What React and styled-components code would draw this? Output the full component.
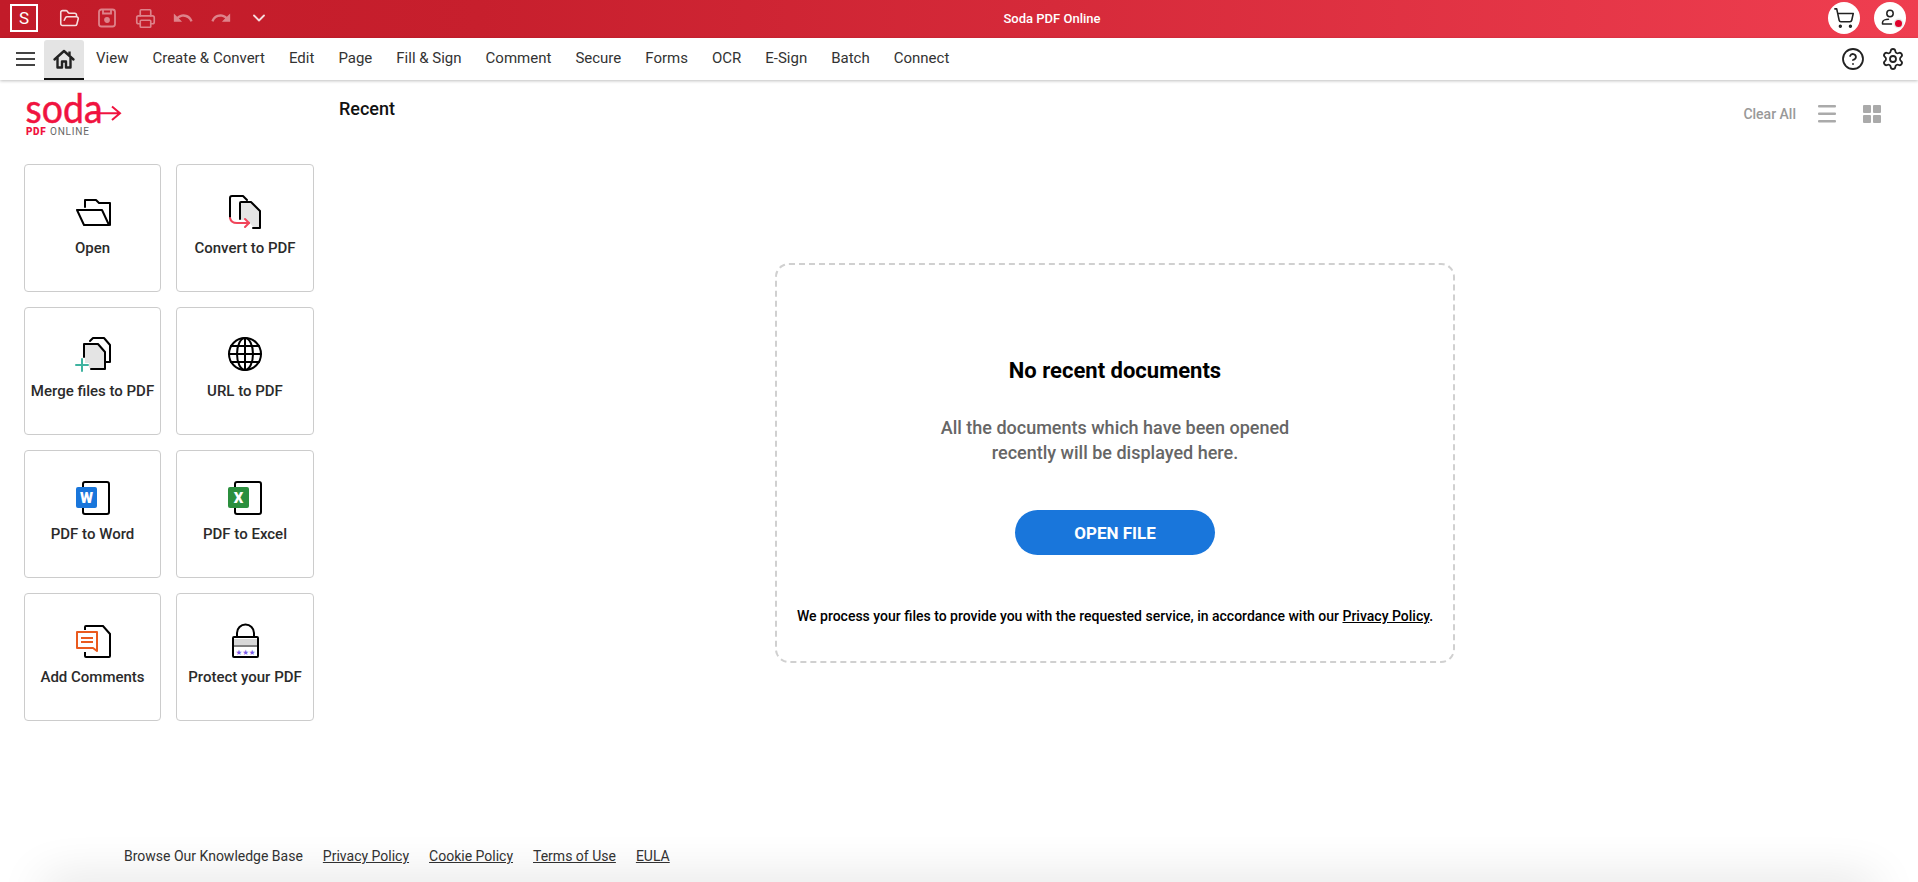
import React from 'react';
import styled, { createGlobalStyle } from 'styled-components';
import { ShoppingCart, Settings, CircleHelp, ChevronDown, Printer, FolderOpen } from 'lucide-react';
import { MdUndo, MdRedo } from 'react-icons/md';

const GlobalStyle = createGlobalStyle`
	html, body {
		margin: 0;
		padding: 0;
		height: 100%;
		background: #fff;
		font-family: Roboto, "Liberation Sans", sans-serif;
		overflow: hidden;
	}
`;

//Top red bar
const PAGE = styled.div`
	position: relative;
	height: 882px;
	display: flex;
	flex-direction: column;
	overflow: hidden;
`;
const TITLEBAR = styled.header`
	height: 38px;
	flex: none;
	box-sizing: border-box;
	display: flex;
	align-items: center;
	padding: 0 12px 2px 10px;
	background: linear-gradient(90deg, #c21b29 0%, #c71f2d 25%, #d62a3a 55%, #ef3e50 100%);
	color: #fff;
`;
const LOGOBOX = styled.div`
	width: 24px;
	height: 24px;
	border: 2px solid #fff;
	display: flex;
	align-items: center;
	justify-content: center;
	font-size: 17px;
	margin-right: 12px;
`;
const QUICK = styled.div`
	width: 38px;
	display: flex;
	justify-content: center;
	color: #fff;
	opacity: ${(p) => (p.$dim ? 0.45 : 0.85)};
`;
const TITLE = styled.div`
	position: absolute;
	left: 0;
	right: 0;
	padding-left: 186px;
	text-align: center;
	font-size: 13px;
	font-weight: 500;
	pointer-events: none;
`;
const ROUND = styled.div`
	position: relative;
	width: 32px;
	height: 32px;
	border-radius: 50%;
	background: #fff;
	color: #222;
	display: flex;
	align-items: center;
	justify-content: center;
	margin-left: 14px;
`;
const DOT = styled.span`
	position: absolute;
	right: 4px;
	bottom: 7px;
	width: 7px;
	height: 7px;
	border-radius: 50%;
	background: #e0002a;
	box-shadow: 0 0 0 1.5px #e8e8e8;
`;
const RIGHTSIDE = styled.div`
	margin-left: auto;
	display: flex;
`;

//Menu bar
const MENUBAR = styled.nav`
	height: 42px;
	flex: none;
	display: flex;
	align-items: center;
	padding-left: 16px;
	padding-right: 13px;
	background: #fff;
	box-shadow: 0 1px 3px rgba(0, 0, 0, 0.25);
	color: #333;
	font-size: 15px;
	z-index: 1;
`;
const BURGER = styled.div`
	width: 19px;
	height: 14px;
	margin-right: 9px;
	border-top: 2px solid #444;
	border-bottom: 2px solid #444;
	position: relative;
	box-sizing: border-box;
	&::after {
		content: '';
		position: absolute;
		left: 0;
		right: 0;
		top: 4px;
		height: 2px;
		background: #444;
	}
`;
const HOMETAB = styled.div`
	width: 40px;
	height: 40px;
	margin-top: 1px;
	margin-right: 12px;
	box-sizing: border-box;
	background: #e4e4e4;
	border-bottom: 2px solid #111;
	border-radius: 3px 3px 0 0;
	display: flex;
	align-items: center;
	justify-content: center;
	color: #222;
`;
const MENUITEM = styled.div`
	margin-right: 24px;
	margin-bottom: 2px;
	white-space: nowrap;
`;
const MENURIGHT = styled.div`
	margin-left: auto;
	display: flex;
	gap: 16px;
	color: #222;
`;

//Main
const MAIN = styled.main`
	flex: 1;
	display: flex;
	min-height: 0;
`;
const SIDE = styled.aside`
	width: 339px;
	flex: none;
	box-sizing: border-box;
	padding: 4px 0 0 24px;
`;
const BRAND = styled.div`
	height: 80px;
`;
const GRID = styled.div`
	display: grid;
	grid-template-columns: 137px 138px;
	grid-auto-rows: 128px;
	gap: 15px;
`;
const TOOL = styled.div`
	box-sizing: border-box;
	border: 1px solid #ccc;
	border-radius: 4px;
	display: flex;
	flex-direction: column;
	align-items: center;
	padding-top: 29px;
	color: #2b2b2b;
	font-size: 15px;
	font-weight: 500;
	white-space: nowrap;
`;
const TOOLICON = styled.div`
	height: 36px;
	margin-bottom: 9px;
`;
const CONTENT = styled.section`
	flex: 1;
	position: relative;
	display: flex;
	flex-direction: column;
`;
const TOPROW = styled.div`
	display: flex;
	align-items: center;
	height: 36px;
	margin-top: 12px;
	padding-right: 37px;
`;
const RECENT = styled.h2`
	margin: 0;
	font-size: 18px;
	font-weight: 500;
	color: #111;
	margin-top: -3px;
`;
const CLEAR = styled.div`
	margin-left: auto;
	color: #999;
	font-size: 14px;
	font-weight: 500;
	margin-top: 8px;
`;
const VIEWICON = styled.div`
	margin-left: ${(p) => p.$gap}px;
	margin-top: 8px;
	display: flex;
`;
const DROP = styled.div`
	align-self: flex-start;
	margin: 135px 0 0 436px;
	width: 680px;
	height: 400px;
	box-sizing: border-box;
	border: 2px dashed #d0d0d0;
	border-radius: 14px;
	display: flex;
	flex-direction: column;
	align-items: center;
	padding-top: 92px;
`;
const HEAD = styled.h1`
	margin: 0;
	font-size: 22px;
	font-weight: 700;
	color: #000;
	line-height: 28px;
`;
const SUB = styled.p`
	margin: 30px 0 0;
	font-size: 18px;
	font-weight: 500;
	line-height: 25px;
	color: #666;
	text-align: center;
`;
const BUTTON = styled.div`
	margin-top: 45px;
	width: 200px;
	height: 45px;
	border-radius: 23px;
	background: #1976db;
	color: #fff;
	font-size: 17px;
	font-weight: 700;
	display: flex;
	align-items: center;
	justify-content: center;
`;
const NOTE = styled.p`
	margin: 53px 0 0;
	font-size: 14px;
	font-weight: 500;
	color: #000;
	white-space: nowrap;
	a {
		color: inherit;
		text-decoration: underline;
	}
`;

//Footer
const FOOTER = styled.footer`
	position: absolute;
	left: 124px;
	bottom: 18px;
	display: flex;
	gap: 20px;
	color: #333;
	font-size: 14px;
	a {
		color: inherit;
		text-decoration: underline;
	}
`;
const SHADE = styled.div`
	position: absolute;
	left: 44px;
	right: 44px;
	bottom: -24px;
	height: 24px;
	box-shadow: 0 0 48px rgba(0, 0, 0, 0.16);
`;

const Stroke = ({ children }) => (
	<svg width="36" height="36" viewBox="0 0 36 36" fill="none" stroke="#000" strokeWidth="2" strokeLinejoin="round" strokeLinecap="round">
		{children}
	</svg>
);

const OpenIcon = () => (
	<Stroke>
		<path d="M10 13V6h11l3 3h11v22" />
		<path d="M2 16h25l7 15H9z" fill="#fff" />
	</Stroke>
);
const ConvertIcon = () => (
	<Stroke>
		<path d="M3 23V4q0-2 2-2h11l4 4" />
		<path d="M14 9h10l8 8v16h-6l-3-4-3-3h-6z" fill="#e4e4e4" stroke="none" />
		<path d="M13 25V9q0-1 1-1h10l9 9v17h-7" />
		<path d="M3 24q1 5 7 5h12" stroke="#f0455a" />
		<path d="M18 25l4 4-4 4" stroke="#f0455a" />
	</Stroke>
);
const MergeIcon = () => (
	<Stroke>
		<path d="M15 4l3-3h11l6 7v17h-4" />
		<path d="M10 8h13l6 7v16H14V26H10z" fill="#e4e4e4" stroke="none" />
		<path d="M9 20V7h14l7 8v17H16" />
		<path d="M1 28h12M7 22v12" stroke="#3fb3a0" />
	</Stroke>
);
const GlobeIcon = () => (
	<Stroke>
		<circle cx="18" cy="17" r="16" />
		<ellipse cx="18" cy="17" rx="8" ry="16" />
		<path d="M18 1v32M4 9h28M4 25h28M2 17h32" />
	</Stroke>
);
const OfficeIcon = ({ color, letter }) => (
	<svg width="36" height="36" viewBox="0 0 36 36">
		<path d="M8 7V4q0-2 2-2h22q2 0 2 2v28q0 2-2 2H10q-2 0-2-2v-4" fill="none" stroke="#000" strokeWidth="2" />
		<rect x="1" y="7" width="21" height="21" rx="2" fill={color} />
		<text x="11.500" y="23" textAnchor="middle" fontFamily="Roboto, sans-serif" fontWeight="900" fontSize="15" fill="#fff">{letter}</text>
	</svg>
);
const CommentIcon = () => (
	<svg width="36" height="36" viewBox="0 0 36 36" fill="none">
		<path d="M10 7V4q0-1 1-1h17l7 8v22q0 1-1 1H11q-1 0-1-1v-4" stroke="#000" strokeWidth="2" />
		<path d="M2 9h20v19l-4-3H2z" fill="#fff" stroke="#ea5a1e" strokeWidth="2" strokeLinejoin="round" />
		<path d="M6 15h12M6 19h12" stroke="#ea5a1e" strokeWidth="2" />
	</svg>
);
const LockIcon = () => (
	<svg width="36" height="36" viewBox="0 0 36 36" fill="none">
		<path d="M10 14V10a8.500 8.500 0 0 1 17 0v4" stroke="#000" strokeWidth="2" />
		<rect x="6" y="14" width="25" height="20" rx="1" fill="#fff" stroke="#000" strokeWidth="2" />
		<rect x="7" y="16" width="23" height="6" fill="#d8d8d8" />
		<path d="M7 23h23" stroke="#000" strokeWidth="1" />
		<text x="18.500" y="32" textAnchor="middle" fontFamily="DejaVu Sans, sans-serif" fontSize="7.500" fill="#7b5be6">★★★</text>
	</svg>
);

const SaveIcon = () => (
	<svg width="20" height="20" viewBox="0 0 20 20" fill="none" stroke="currentColor" strokeWidth="1.800">
		<rect x="2" y="1.500" width="16" height="17" rx="2.500" />
		<path d="M6 1.500v4h8v-4" />
		<circle cx="10" cy="12" r="2" fill="currentColor" />
	</svg>
);
const HomeIcon = () => (
	<svg width="24" height="24" viewBox="0 0 24 24" fill="none" stroke="currentColor" strokeWidth="2.400" strokeLinejoin="round">
		<path d="M2.500 12.500 12 4l9.500 8.500" strokeLinecap="round" />
		<path d="M17.500 8V4.500" />
		<path d="M5.500 10.500V20.500h4.500v-6h4v6h4.500V10.500" />
	</svg>
);
const UserIcon = () => (
	<svg width="20" height="20" viewBox="0 0 20 20" fill="none" stroke="#222" strokeWidth="1.500">
		<circle cx="10" cy="5.500" r="3.200" />
		<path d="M2.500 16v-1.500c0-2 3-3.200 6-3.200M2.500 16h9" strokeLinecap="round" />
	</svg>
);

const SodaLogo = () => (
	<svg width="100" height="54" viewBox="0 0 100 54">
		<text x="1.500" y="38.700" fontFamily="Lato, Roboto, sans-serif" fontSize="40" fill="#f0133f" stroke="#f0133f" strokeWidth="0.500" textLength="77" lengthAdjust="spacingAndGlyphs">soda</text>
		<path d="M67 29.300h28.500M88 22.500l8 6.800-8 6.800" fill="none" stroke="#f0133f" strokeWidth="2" />
		<text x="2" y="51" fontFamily="Roboto, sans-serif" fontWeight="900" fontSize="10" fill="#f0133f" letterSpacing="0.600">PDF</text>
		<text x="26" y="51" fontFamily="Roboto, sans-serif" fontSize="10" fill="#666" letterSpacing="0.800">ONLINE</text>
	</svg>
);

const ListIcon = () => (
	<svg width="18" height="18" viewBox="0 0 18 18" fill="#aaa">
		<rect y="0" width="18" height="2.500" rx="1" />
		<rect y="7.500" width="18" height="2.500" rx="1" />
		<rect y="15" width="18" height="2.500" rx="1" />
	</svg>
);
const TilesIcon = () => (
	<svg width="18" height="18" viewBox="0 0 18 18" fill="#aaa">
		<rect width="8" height="8" rx="1" />
		<rect x="10" width="8" height="8" rx="1" />
		<rect y="10" width="8" height="8" rx="1" />
		<rect x="10" y="10" width="8" height="8" rx="1" />
	</svg>
);

const menu = ['View', 'Create & Convert', 'Edit', 'Page', 'Fill & Sign', 'Comment', 'Secure', 'Forms', 'OCR', 'E-Sign', 'Batch', 'Connect'];
const tools = [
	{ label: 'Open', icon: <OpenIcon /> },
	{ label: 'Convert to PDF', icon: <ConvertIcon /> },
	{ label: 'Merge files to PDF', icon: <MergeIcon /> },
	{ label: 'URL to PDF', icon: <GlobeIcon /> },
	{ label: 'PDF to Word', icon: <OfficeIcon color="#1976db" letter="W" /> },
	{ label: 'PDF to Excel', icon: <OfficeIcon color="#2b8f3e" letter="X" /> },
	{ label: 'Add Comments', icon: <CommentIcon /> },
	{ label: 'Protect your PDF', icon: <LockIcon /> },
];

const App = () => {
	return (
		<PAGE>
			<GlobalStyle />
			<TITLEBAR>
				<LOGOBOX>S</LOGOBOX>
				<QUICK><FolderOpen size={21} strokeWidth={1.8} /></QUICK>
				<QUICK $dim><SaveIcon /></QUICK>
				<QUICK $dim><Printer size={21} strokeWidth={1.9} /></QUICK>
				<QUICK $dim><MdUndo size={22} /></QUICK>
				<QUICK $dim><MdRedo size={22} /></QUICK>
				<QUICK><ChevronDown size={20} strokeWidth={2.2} /></QUICK>
				<TITLE>Soda PDF Online</TITLE>
				<RIGHTSIDE>
					<ROUND><ShoppingCart size={22} strokeWidth={1.7} /></ROUND>
					<ROUND><UserIcon /><DOT /></ROUND>
				</RIGHTSIDE>
			</TITLEBAR>
			<MENUBAR>
				<BURGER />
				<HOMETAB><HomeIcon /></HOMETAB>
				{menu.map((m) => (
					<MENUITEM key={m}>{m}</MENUITEM>
				))}
				<MENURIGHT>
					<CircleHelp size={24} strokeWidth={1.8} />
					<Settings size={24} strokeWidth={1.8} />
				</MENURIGHT>
			</MENUBAR>
			<MAIN>
				<SIDE>
					<BRAND><SodaLogo /></BRAND>
					<GRID>
						{tools.map((t) => (
							<TOOL key={t.label}>
								<TOOLICON>{t.icon}</TOOLICON>
								{t.label}
							</TOOL>
						))}
					</GRID>
				</SIDE>
				<CONTENT>
					<TOPROW>
						<RECENT>Recent</RECENT>
						<CLEAR>Clear All</CLEAR>
						<VIEWICON $gap={22}><ListIcon /></VIEWICON>
						<VIEWICON $gap={27}><TilesIcon /></VIEWICON>
					</TOPROW>
					<DROP>
						<HEAD>No recent documents</HEAD>
						<SUB>All the documents which have been opened<br />recently will be displayed here.</SUB>
						<BUTTON>OPEN FILE</BUTTON>
						<NOTE>We process your files to provide you with the requested service, in accordance with our <a>Privacy Policy</a>.</NOTE>
					</DROP>
				</CONTENT>
			</MAIN>
			<FOOTER>
				<span>Browse Our Knowledge Base</span>
				<a>Privacy Policy</a>
				<a>Cookie Policy</a>
				<a>Terms of Use</a>
				<a>EULA</a>
			</FOOTER>
			<SHADE />
		</PAGE>
	);
};

export default App;
